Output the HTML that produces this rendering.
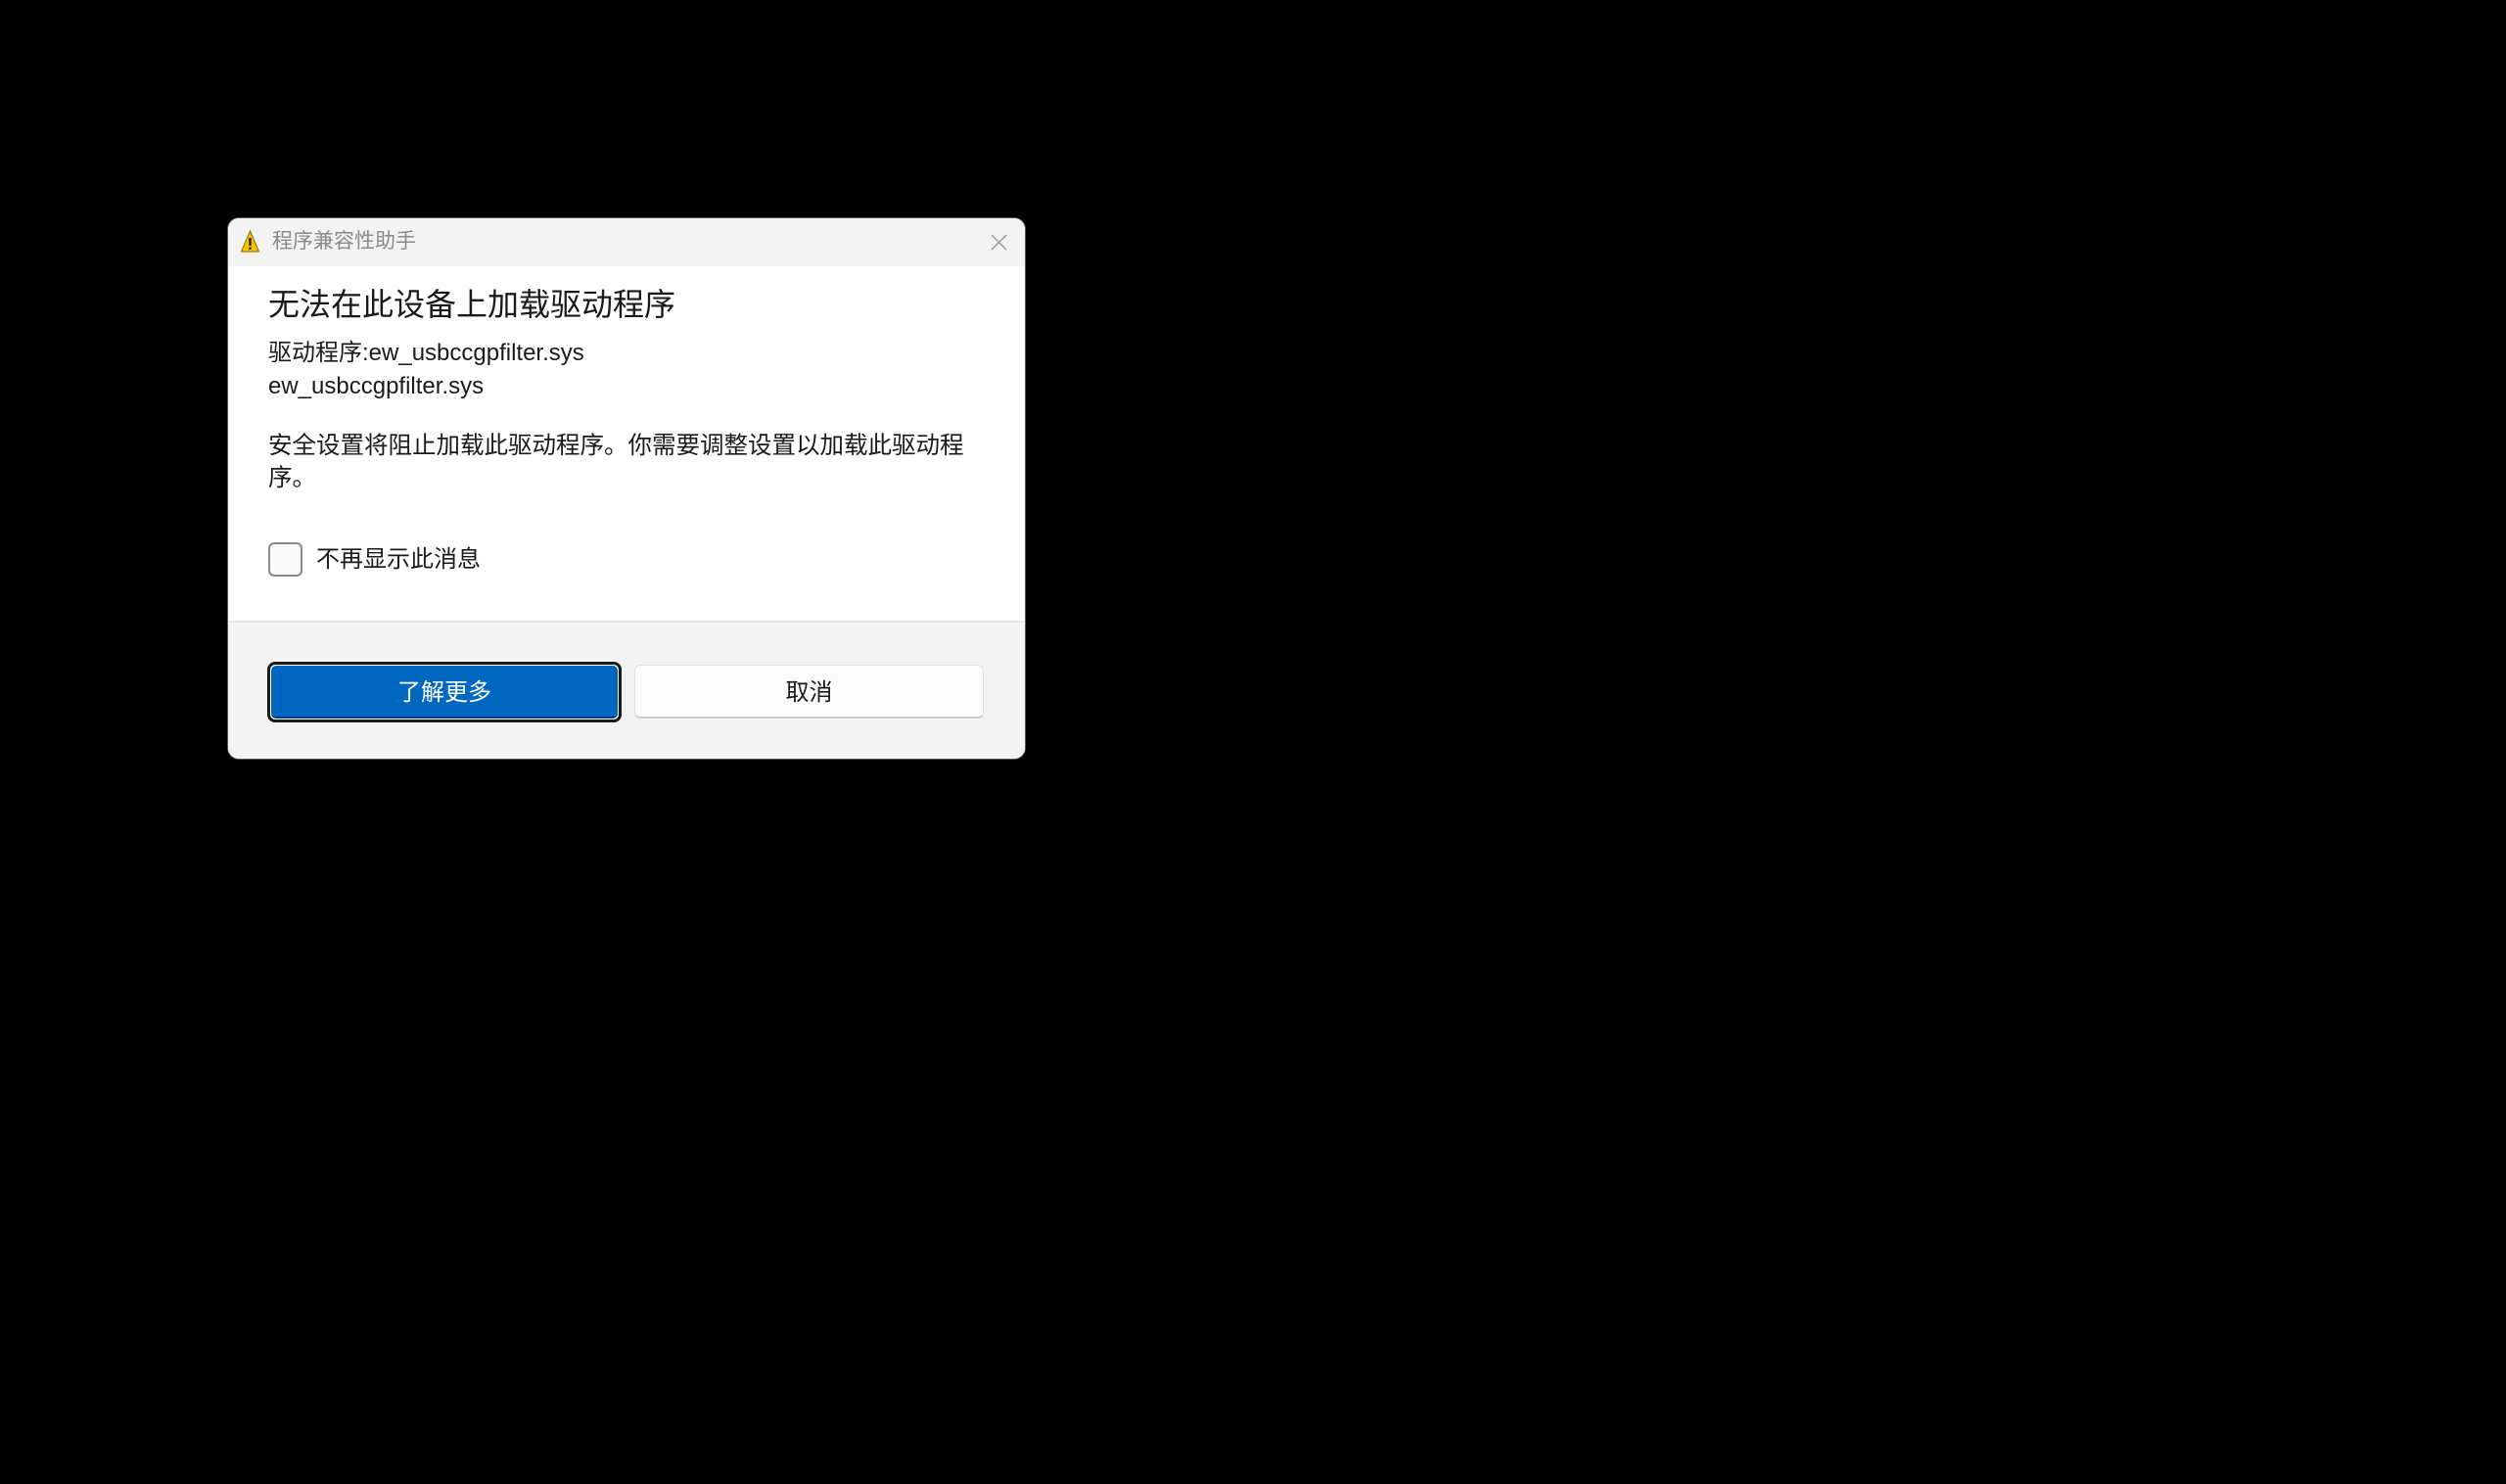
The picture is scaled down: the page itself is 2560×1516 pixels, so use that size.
<!DOCTYPE html>
<html><head><meta charset="utf-8"><style>
*{margin:0;padding:0;box-sizing:border-box}
body{width:2560px;height:1516px;background:#000;position:relative;overflow:hidden;font-family:"Liberation Sans","Noto Sans CJK SC",sans-serif;color:#1a1a1a}
.dlg{position:absolute;left:232px;top:222px;width:816px;height:554px;background:#fff;border-radius:12px;overflow:hidden;border:1px solid #555}
.tb{position:absolute;left:0;top:0;width:100%;height:49px;background:#f3f3f3}
.a{position:absolute;white-space:nowrap;line-height:1}
.foot{position:absolute;left:0;top:411px;width:100%;height:143px;background:#f3f3f3;border-top:2px solid #e5e5e5}
</style></head><body>
<div class="dlg">
 <div class="tb"></div>
 <svg class="a" style="left:13px;top:12px" width="19" height="24" viewBox="0 0 19 24"><path d="M9.5 1 L18.5 22 L0.5 22 Z" fill="#f5c400" stroke="#8a6a00" stroke-width="1"/><rect x="8.3" y="8" width="2.4" height="8" fill="#222"/><rect x="8.3" y="17.5" width="2.4" height="2.4" fill="#222"/></svg>
 <div class="a" style="left:45px;top:13px;font-size:21px;color:#8a8a8a">程序兼容性助手</div>
 <svg class="a" style="left:779px;top:16px" width="17" height="17" viewBox="0 0 17 17"><path d="M1 1L16 16M16 1L1 16" stroke="#999" stroke-width="1.5"/></svg>
 <div class="a" style="left:41px;top:72px;font-size:32px;color:#1a1a1a">无法在此设备上加载驱动程序</div>
 <div class="a" style="left:41px;top:126px;font-size:24px">驱动程序:ew_usbccgpfilter.sys</div>
 <div class="a" style="left:41px;top:160px;font-size:24px">ew_usbccgpfilter.sys</div>
 <div class="a" style="left:41px;top:221px;font-size:24.5px">安全设置将阻止加载此驱动程序。你需要调整设置以加载此驱动程</div>
 <div class="a" style="left:41px;top:254px;font-size:24.5px">序。</div>
 <div class="a" style="left:41px;top:331px;width:35px;height:35px;border:2px solid #8a8a8a;border-radius:6px;background:#fafafa"></div>
 <div class="a" style="left:90px;top:337px;font-size:24px">不再显示此消息</div>
 <div class="foot"></div>
 <div class="a" style="left:40px;top:453px;width:362px;height:62px;border:3px solid #1a1a1a;border-radius:8px;background:#fff;padding:1px">
  <div style="width:100%;height:100%;background:#0067c0;border-radius:5px;border-bottom:2px solid #003e8a;color:#fff;font-size:24px;display:flex;align-items:center;justify-content:center;padding-top:4px">了解更多</div>
 </div>
 <div class="a" style="left:415px;top:456px;width:357px;height:55px;background:#fbfbfb;border:1px solid #e0e0e0;border-bottom:2px solid #ccc;border-radius:6px;font-size:24px;display:flex;align-items:center;justify-content:center;color:#1a1a1a;padding-top:4px">取消</div>
</div>
</body></html>
